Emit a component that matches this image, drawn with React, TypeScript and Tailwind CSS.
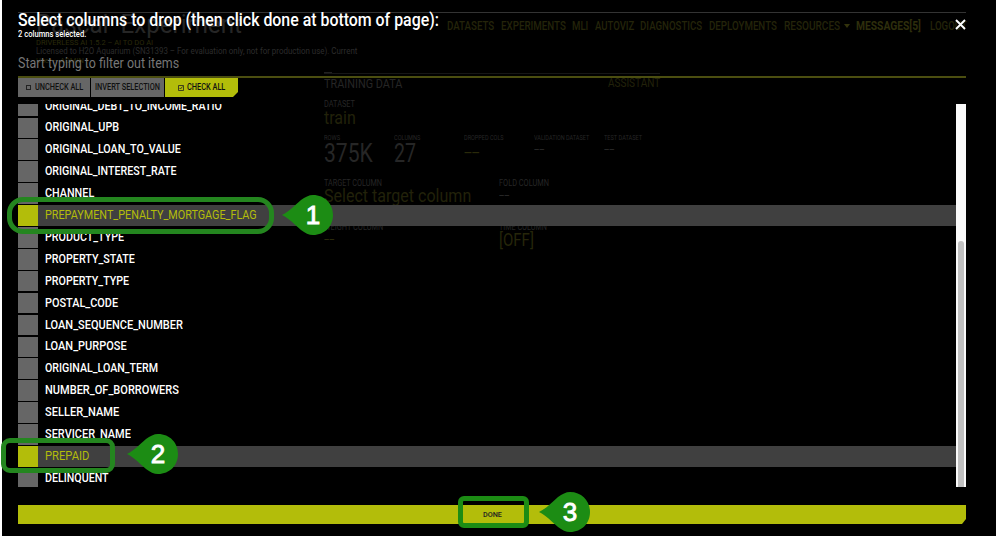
import { useLayoutEffect, useRef } from "react";

type TProps = { children: string; w: number; className?: string };

// Condensed label: squeezes its text horizontally into the given width.
function T({ children, w, className = "" }: TProps) {
  const ref = useRef<HTMLSpanElement>(null);
  useLayoutEffect(() => {
    const el = ref.current;
    if (el) el.style.transform = `scaleX(${w / el.offsetWidth})`;
  }, [w, children]);
  return (
    <span className={`block shrink-0 whitespace-nowrap ${className}`} style={{ width: w }}>
      <span ref={ref} className="inline-block origin-left whitespace-pre">
        {children}
      </span>
    </span>
  );
}

const columns: { name: string; w: number; on?: boolean }[] = [
  { name: "ORIGINAL_DEBT_TO_INCOME_RATIO", w: 177 },
  { name: "ORIGINAL_UPB", w: 74 },
  { name: "ORIGINAL_LOAN_TO_VALUE", w: 136 },
  { name: "ORIGINAL_INTEREST_RATE", w: 132 },
  { name: "CHANNEL", w: 49 },
  { name: "PREPAYMENT_PENALTY_MORTGAGE_FLAG", w: 212, on: true },
  { name: "PRODUCT_TYPE", w: 79 },
  { name: "PROPERTY_STATE", w: 90 },
  { name: "PROPERTY_TYPE", w: 84 },
  { name: "POSTAL_CODE", w: 73 },
  { name: "LOAN_SEQUENCE_NUMBER", w: 138 },
  { name: "LOAN_PURPOSE", w: 82 },
  { name: "ORIGINAL_LOAN_TERM", w: 113 },
  { name: "NUMBER_OF_BORROWERS", w: 134 },
  { name: "SELLER_NAME", w: 74 },
  { name: "SERVICER_NAME", w: 86 },
  { name: "PREPAID", w: 44, on: true },
  { name: "DELINQUENT", w: 64 },
];

function Underlay() {
  return (
    <div className="flex h-[536px] flex-col pl-[18px] pr-[30px] pt-3 text-[#262626]">
      <div className="h-px shrink-0 bg-[#333]" />
      <div className="flex h-[59px] shrink-0">
        <div className="w-[429px] shrink-0 pl-[18px]">
          <T w={206} className="h-6 text-[25px] leading-6">Pascal  Experiment</T>
          <T w={117} className="mt-px h-[9px] text-[8px] leading-[10px] text-[#2a2a0a]">DRIVERLESS AI 1.5.2 – AI TO DO AI</T>
          <T w={321} className="h-[9px] text-[8.5px] leading-[9px] text-[#2c2c2c]">Licensed to H2O Aquarium (SN31393 – For evaluation only, not for production use). Current</T>
          <T w={48} className="text-[8px] leading-[9px] text-[#2a2a0a]">User – ADMIN</T>
        </div>
        <div className="flex h-[25px] items-center gap-[6.6px] text-[12px] font-medium text-[#24240a]">
          <T w={47}>DATASETS</T>
          <T w={65}>EXPERIMENTS</T>
          <T w={16}>MLI</T>
          <T w={39}>AUTOVIZ</T>
          <T w={62}>DIAGNOSTICS</T>
          <T w={68}>DEPLOYMENTS</T>
          <div className="flex items-center gap-1">
            <T w={56}>RESOURCES</T>
            <svg className="h-[4px] w-[6px]" viewBox="0 0 6 4"><path d="M0 0h6L3 4z" fill="#33330c" /></svg>
          </div>
          <T w={65} className="font-bold text-[#2e2e0c]">MESSAGES[5]</T>
          <T w={37} className="ml-0.5">LOGOUT</T>
        </div>
      </div>
      <div className="ml-[306px] flex w-[336px] flex-col">
        <div className="h-px w-2 bg-[#222]" />
        <div className="h-px bg-[#161616]" />
        <div className="mt-px flex h-[17px] items-center justify-between">
          <T w={78} className="text-[13.5px]">TRAINING DATA</T>
          <T w={52} className="text-[12.5px] text-[#22220a]">ASSISTANT</T>
        </div>
        <T w={31} className="mt-[7px] h-[10px] text-[9px] leading-[10px]">DATASET</T>
        <T w={32} className="h-5 text-[18px] leading-[17px] text-[#22220a]">train</T>
        <div className="mt-[4px] flex h-[43px]">
          <div className="w-[70px]"><T w={16} className="h-[10px] text-[6.5px] leading-[10px]">ROWS</T><T w={49} className="text-[25px] leading-[21px]">375K</T></div>
          <div className="w-[70px]"><T w={26} className="h-[10px] text-[6.5px] leading-[10px]">COLUMNS</T><T w={22} className="text-[25px] leading-[21px]">27</T></div>
          <div className="w-[70px]"><T w={40} className="h-[10px] text-[6.5px] leading-[10px]">DROPPED COLS</T><T w={16} className="text-[16px] leading-[20px] text-[#2a2a0a]">--</T></div>
          <div className="w-[70px]"><T w={55} className="h-[10px] text-[6.5px] leading-[10px]">VALIDATION DATASET</T><T w={11} className="text-[12px] leading-[13px]">--</T></div>
          <div><T w={38} className="h-[10px] text-[6.5px] leading-[10px]">TEST DATASET</T><T w={11} className="text-[12px] leading-[13px]">--</T></div>
        </div>
        <div className="mt-[2px] flex h-[43px]">
          <div className="w-[175px]"><T w={58} className="text-[9px] leading-[10px]">TARGET COLUMN</T><T w={147} className="text-[18px] leading-[15px] text-[#22220a]">Select target column</T></div>
          <div><T w={50} className="text-[9px] leading-[10px]">FOLD COLUMN</T><T w={11} className="text-[12px] leading-[14px]">--</T></div>
        </div>
        <div className="mt-px flex">
          <div className="w-[175px]"><T w={59} className="h-[10px] text-[9px] leading-[10px]">WEIGHT COLUMN</T><T w={11} className="text-[12px] leading-[14px] text-[#2a2a0a]">--</T></div>
          <div><T w={48} className="h-[10px] text-[9px] leading-[10px]">TIME COLUMN</T><T w={35} className="text-[18px] leading-[15px] text-[#26260a]">[OFF]</T></div>
        </div>
      </div>
    </div>
  );
}

function Pin({ n, className }: { n: string; className: string }) {
  return (
    <div className={`absolute h-10 w-[51px] ${className}`}>
      <svg className="h-full w-full" viewBox="0 0 51 40">
        <path d="M0 20C8 16 12 11 19 5C23 2 27 0 31 0C43 0 51 9 51 20S43 40 31 40C27 40 23 38 19 35C12 29 8 24 0 20Z" fill="#1c8c14" />
      </svg>
      <span className="absolute inset-y-0 left-[20px] w-[22px] text-center font-['Liberation_Sans'] text-[26px] leading-[41px] text-white [-webkit-text-stroke:0.9px_white]">{n}</span>
    </div>
  );
}

export default function App() {
  return (
    <div className="relative h-[536px] w-[996px] overflow-hidden bg-black font-['Roboto',sans-serif]">
      <Underlay />
      <div className="absolute inset-0 flex flex-col border-l-2 border-white pl-[16px] pr-[30px] text-white">
        <div className="flex h-[30px] shrink-0 items-end justify-between">
          <T w={421} className="h-[21px] text-[18px] font-medium leading-[22px]">Select columns to drop (then click done at bottom of page):</T>
          <svg className="h-[11px] w-[11px]" viewBox="0 0 11 11"><path d="M1 1l9 9M10 1l-9 9" stroke="#fff" strokeWidth="1.9" /></svg>
        </div>
        <T w={68} className="h-[9px] text-[8.5px] font-medium leading-[9px]">2 columns selected.</T>
        <div className="flex h-[39px] shrink-0 items-end border-b-2 border-[#4b4e10] pb-[4px]">
          <T w={161} className="text-[14px] leading-[18px] text-[#777]">Start typing to filter out items</T>
        </div>
        <div className="flex h-[19px] shrink-0 gap-px text-[9.5px] font-medium text-[#111]">
          <div className="flex w-[72px] items-center bg-[#666] pl-2"><span className="mr-[4px] h-[5px] w-[5px] border border-[#222]" /><T w={48}>UNCHECK ALL</T></div>
          <div className="flex w-[73px] items-center justify-center bg-[#666]"><T w={65}>INVERT SELECTION</T></div>
          <div className="flex w-[73px] items-center bg-[#b3bd0a] pl-[13px] [clip-path:polygon(0_0,100%_0,100%_14px,68px_100%,0_100%)]">
            <svg className="mr-[3px] h-[6px] w-[6px]" viewBox="0 0 6 6"><path d="M.5.5h5v5h-5zM1.5 3l1 1 2-2.5" fill="none" stroke="#222" strokeWidth=".8" /></svg>
            <T w={38}>CHECK ALL</T>
          </div>
        </div>
        <div className="mt-[7px] flex h-[383px] shrink-0">
          <div className="h-full w-[938px] overflow-hidden">
            <div className="-mt-[8.3px] flex flex-col gap-[1.3px]">
              {columns.map((c) => (
                <div key={c.name} className={`flex h-[20.6px] shrink-0 items-center gap-[7px] ${c.on ? "bg-[#404040] text-[#b3bd0a]" : ""}`}>
                  <div className={`h-full w-5 ${c.on ? "bg-[#b3bd0a]" : "bg-[#666]"}`} />
                  <T w={c.w} className={`pb-[1.4px] text-[13px] leading-[17.4px] ${c.on ? "" : "font-medium"}`}>{c.name}</T>
                </div>
              ))}
            </div>
          </div>
          <div className="h-full w-[10px] bg-[#fafafa] pl-[2px] pt-[137px]">
            <div className="h-[246px] w-[6px] rounded-t-full bg-[#c0c0c0]" />
          </div>
        </div>
        <div className="mt-[18px] flex h-[19px] shrink-0 items-center justify-center bg-[#b3bd0a] text-[8px] font-medium text-[#222] [clip-path:polygon(0_0,100%_0,100%_14px,944px_100%,0_100%)]">
          <T w={19}>DONE</T>
        </div>
      </div>
      <div className="absolute left-[7px] top-[197px] h-[37px] w-[267px] rounded-[16px] border-[5px] border-[#24861f]" />
      <div className="absolute left-[1px] top-[438px] h-[35px] w-[114px] rounded-[9px] border-[5px] border-[#24861f]" />
      <div className="absolute left-[458px] top-[496px] h-[32px] w-[71px] rounded-[6px] border-[5px] border-[#1c8c14]" />
      <Pin n="1" className="left-[282px] top-[195px]" />
      <Pin n="2" className="left-[127px] top-[434px]" />
      <Pin n="3" className="left-[539px] top-[492px]" />
    </div>
  );
}
